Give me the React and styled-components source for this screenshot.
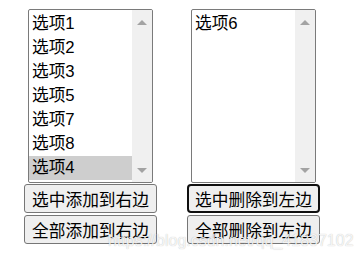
import React from 'react';
import styled, { createGlobalStyle } from 'styled-components';

const GlobalStyle = createGlobalStyle`
  body {
    margin: 0;
    background: #fff;
    font-family: "Liberation Sans", "Noto Sans CJK SC", sans-serif;
  }
`;

const Page = styled.div`
  position: relative;
  display: flex;
  gap: 28px;
  padding: 9px 0 0 23px;
  width: 362px;
  height: 260px;
  box-sizing: border-box;
`;

const Column = styled.div`
  display: flex;
  flex-direction: column;
  align-items: center;
  width: 135px;
`;

const ListBox = styled.div`
  display: flex;
  width: 125px;
  height: 174px;
  box-sizing: border-box;
  border: 1px solid #7a7a7a;
  border-radius: 2px;
  background: #fff;
  overflow: hidden;
`;

const Options = styled.div`
  flex: 1;
  padding-top: 2px;
`;

const Option = styled.div`
  height: 24px;
  line-height: 24px;
  padding-left: 3px;
  font-size: 16.7px;
  color: #000;
  background: ${({ $selected }) => ($selected ? '#cecece' : 'transparent')};
`;

const Scrollbar = styled.div`
  display: flex;
  flex-direction: column;
  justify-content: space-between;
  align-items: center;
  width: 20px;
  padding: 10px 0 9px;
  box-sizing: border-box;
  background: #f0f0f0;
`;

const Arrow = styled.span`
  width: 0;
  height: 0;
  border-left: 5px solid transparent;
  border-right: 5px solid transparent;
  ${({ $down }) =>
    $down ? 'border-top: 5px solid #a3a3a3;' : 'border-bottom: 5px solid #a3a3a3;'}
`;

const Buttons = styled.div`
  display: flex;
  flex-direction: column;
  align-items: center;
  gap: 2px;
  margin-top: 1px;
`;

const Button = styled.button`
  height: 29px;
  padding: 0 ${({ $focused }) => ($focused ? '6px' : '7px')};
  font-family: inherit;
  font-size: 16.7px;
  color: #000;
  background: #efefef;
  border: ${({ $focused }) => ($focused ? '2px solid #101010' : '1px solid #767676')};
  border-radius: ${({ $focused }) => ($focused ? '4px' : '3px')};
  white-space: nowrap;
`;

const Watermark = styled.div`
  position: absolute;
  left: 108px;
  top: 232px;
  font-size: 16px;
  color: rgba(255, 255, 255, 0.85);
  text-shadow: 0 0 1px rgba(0, 0, 0, 0.28);
  pointer-events: none;
  white-space: nowrap;
`;

const Select = ({ items, selected }) => (
  <ListBox>
    <Options>
      {items.map((item) => (
        <Option key={item} $selected={item === selected}>
          {item}
        </Option>
      ))}
    </Options>
    <Scrollbar>
      <Arrow />
      <Arrow $down />
    </Scrollbar>
  </ListBox>
);

export default function App() {
  return (
    <>
      <GlobalStyle />
      <Page>
        <Column>
          <Select
            items={['选项1', '选项2', '选项3', '选项5', '选项7', '选项8', '选项4']}
            selected="选项4"
          />
          <Buttons>
            <Button>选中添加到右边</Button>
            <Button>全部添加到右边</Button>
          </Buttons>
        </Column>
        <Column>
          <Select items={['选项6']} />
          <Buttons>
            <Button $focused>选中删除到左边</Button>
            <Button>全部删除到左边</Button>
          </Buttons>
        </Column>
        <Watermark>https://blog.csdn.net/qq_41837102</Watermark>
      </Page>
    </>
  );
}
